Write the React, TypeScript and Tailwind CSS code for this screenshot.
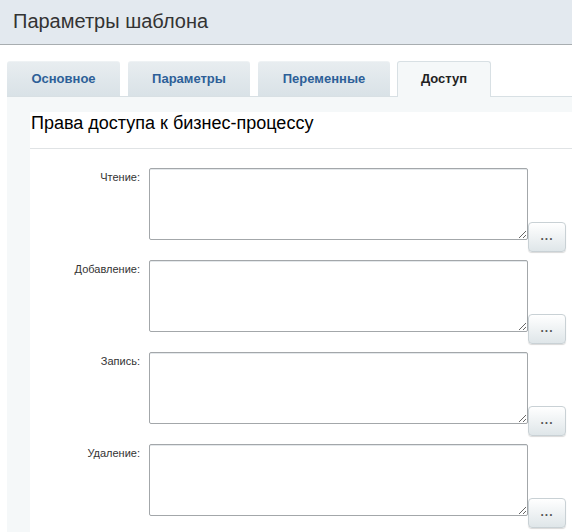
const TABS = [
  { label: 'Основное', width: 'w-[113px]' },
  { label: 'Параметры', width: 'w-[122px]' },
  { label: 'Переменные', width: 'w-[132px]' },
];

const FIELDS = ['Чтение:', 'Добавление:', 'Запись:', 'Удаление:'];

const AccessRow = ({ label }: { label: string }) => (
  <div className="flex h-[92px] items-start">
    <div className="w-[110px] pt-[2px] text-right text-[11px] leading-[14px] text-[#333]">{label}</div>
    <textarea className="ml-[9px] h-[72px] w-[379px] rounded-[2px] border border-[#a3a7aa] bg-white shadow-[inset_0_1px_0_#e4e8eb] outline-none" />
    <button className="mt-[54px] flex h-[30px] w-[38px] items-center justify-center rounded-[4px] border border-[#c9d1d5] bg-gradient-to-b from-[#ffffff] to-[#dfe6e9] pb-[3px] text-[12px] font-bold tracking-[1px] text-[#555] shadow-[0_1px_1px_rgba(0,0,0,0.15)]">
      ...
    </button>
  </div>
);

export default function App() {
  return (
    <div className="min-h-[532px] bg-white font-['Liberation_Sans',Arial,sans-serif]">
      <div className="h-[45px] border-b border-[#a8adb0] bg-[#e3e9ef] pl-[13px] pt-[9px] text-[20px] leading-[24px] text-[#333]">
        Параметры шаблона
      </div>

      <div className="mt-[16px] flex gap-[8px] pl-[7px]">
        {TABS.map((tab) => (
          <div
            key={tab.label}
            className={`${tab.width} flex h-[35px] items-center justify-center rounded-t-[3px] border-t border-[#eef2f4] bg-gradient-to-b from-[#e8edf0] to-[#d9e2e7] text-[13px] font-bold text-[#2d5f98]`}
          >
            {tab.label}
          </div>
        ))}
        <div className="relative z-10 -ml-[1px] flex h-[36px] w-[94px] items-center justify-center rounded-t-[3px] border border-b-0 border-[#d8e0e4] bg-[#f5f8f9] pb-[1px] text-[13px] font-bold text-[#222]">
          Доступ
        </div>
      </div>

      <div className="-mt-[1px] ml-[7px] border-t border-[#d8e0e4] bg-[#f5f8f9] pl-[23px] pt-[15px]">
        <div className="bg-white">
          <div className="h-[37px] border-b border-[#e0e3e5] pl-[1px] pt-[1px] text-[18px] leading-[20px] text-black">
            Права доступа к бизнес-процессу
          </div>
          <div className="pt-[19px]">
            {FIELDS.map((f) => (
              <AccessRow key={f} label={f} />
            ))}
          </div>
        </div>
      </div>
    </div>
  );
}
